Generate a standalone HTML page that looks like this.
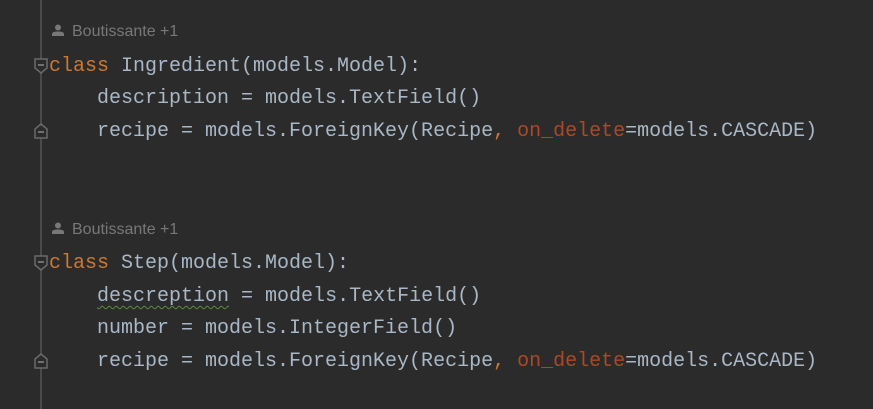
<!DOCTYPE html>
<html><head><style>
html,body{margin:0;padding:0;background:#2b2b2b;width:873px;height:409px;overflow:hidden}
.g{position:absolute;left:40px;top:0;width:2px;height:409px;background:#4a4a4a}
.l{position:absolute;left:49px;font:20px "Liberation Mono",monospace;color:#a9b7c6;white-space:pre;line-height:24px}
.k{color:#cc7832}.p{color:#aa4926}
.a{position:absolute;left:52px;font:16px "Liberation Sans",sans-serif;color:#787878;line-height:20px}
.f{position:absolute;left:33px;width:16px;height:18px}
.w{text-decoration:underline wavy #5c8a3c;text-underline-offset:4px;text-decoration-thickness:1px}
</style></head><body>
<div class="g"></div>
<svg class="f" style="top:57px" viewBox="0 0 16 18"><path d="M2 2H14V11L8 16L2 11Z" fill="#2b2b2b" stroke="#6a6a6a" stroke-width="1.5"/><path d="M5 8H11" stroke="#888" stroke-width="1.5"/></svg>
<svg class="f" style="top:122px" viewBox="0 0 16 18"><path d="M2 16H14V7L8 2L2 7Z" fill="#2b2b2b" stroke="#6a6a6a" stroke-width="1.5"/><path d="M5 10H11" stroke="#888" stroke-width="1.5"/></svg>
<svg class="f" style="top:254px" viewBox="0 0 16 18"><path d="M2 2H14V11L8 16L2 11Z" fill="#2b2b2b" stroke="#6a6a6a" stroke-width="1.5"/><path d="M5 8H11" stroke="#888" stroke-width="1.5"/></svg>
<svg class="f" style="top:352px" viewBox="0 0 16 18"><path d="M2 16H14V7L8 2L2 7Z" fill="#2b2b2b" stroke="#6a6a6a" stroke-width="1.5"/><path d="M5 10H11" stroke="#888" stroke-width="1.5"/></svg>
<div class="a" style="top:22px"><svg width="12" height="12" viewBox="0 0 12 12" style="vertical-align:0px;margin-right:8px"><circle cx="6" cy="3.5" r="3" fill="#787878"/><path d="M0 12V10Q0 7.5 6 7.5Q12 7.5 12 10V12Z" fill="#787878"/></svg>Boutissante +1</div>
<div class="l" style="top:55px"><span class="k">class</span> Ingredient(models.Model):</div>
<div class="l" style="top:87px">    description = models.TextField()</div>
<div class="l" style="top:120px">    recipe = models.ForeignKey(Recipe<span class="k">,</span> <span class="p">on_delete</span>=models.CASCADE)</div>
<div class="a" style="top:220px"><svg width="12" height="12" viewBox="0 0 12 12" style="vertical-align:0px;margin-right:8px"><circle cx="6" cy="3.5" r="3" fill="#787878"/><path d="M0 12V10Q0 7.5 6 7.5Q12 7.5 12 10V12Z" fill="#787878"/></svg>Boutissante +1</div>
<div class="l" style="top:252px"><span class="k">class</span> Step(models.Model):</div>
<div class="l" style="top:285px">    <span class="w">descreption</span> = models.TextField()</div>
<div class="l" style="top:317px">    number = models.IntegerField()</div>
<div class="l" style="top:350px">    recipe = models.ForeignKey(Recipe<span class="k">,</span> <span class="p">on_delete</span>=models.CASCADE)</div>
</body></html>
